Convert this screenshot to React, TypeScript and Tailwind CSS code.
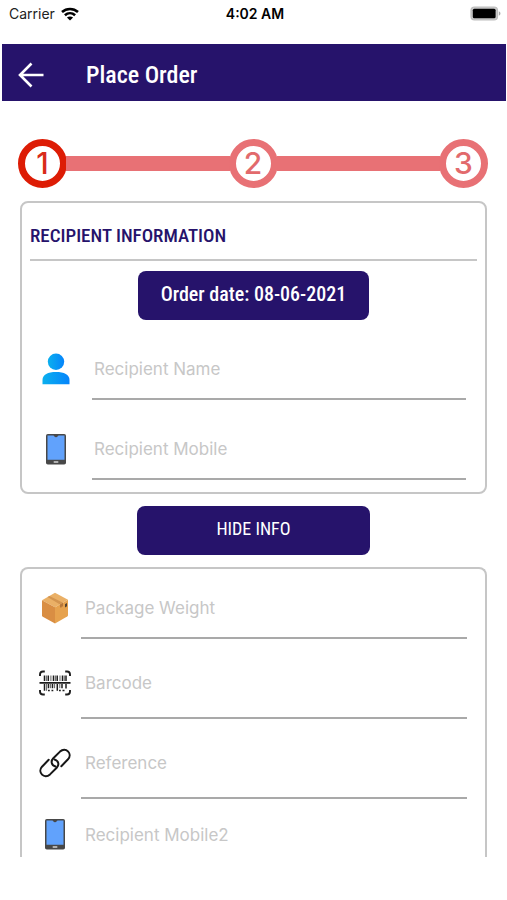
import { useState, type ReactNode } from "react";

const condensed = "font-['Roboto_Condensed','Roboto',sans-serif]";

function WifiIcon() {
  return (
    <svg viewBox="0 0 18 14" className="h-[14px] w-[18px]" fill="none" stroke="#000" strokeWidth="2.6" aria-hidden="true">
      <path d="M1 5C5.6.9 12.4.9 17 5" />
      <path d="M3.9 8.3c3-2.7 7.200-2.700 10.200 0" />
      <path d="M9 13.600 5.900 10.500c1.800-1.500 4.400-1.500 6.200 0z" fill="#000" stroke="none" />
    </svg>
  );
}

function BatteryIcon() {
  return (
    <svg viewBox="0 0 31 15" className="h-[15px] w-[31px]" aria-hidden="true">
      <rect x="1" y="1" width="26.500" height="13" rx="3.500" fill="#c9c9c9" stroke="#bdbdbd" strokeWidth="1.200" />
      <rect x="2.800" y="2.800" width="22.800" height="9.400" rx="1.500" fill="#000" />
      <path d="M28.800 5.300c2.200.8 2.200 3.600 0 4.400z" fill="#a8a8a8" />
    </svg>
  );
}

function BackIcon() {
  return (
    <svg viewBox="0 0 26 26" className="size-[26px]" fill="none" stroke="#fff" strokeWidth="2.600" aria-hidden="true">
      <path d="M25.500 13H2.500M13.500 1.500 2 13l11.500 11.500" />
    </svg>
  );
}

function PersonIcon() {
  return (
    <svg viewBox="0 0 28 32" className="h-8 w-7" aria-hidden="true">
      <defs>
        <linearGradient id="person" x1="0" x2="1">
          <stop offset="0" stopColor="#0bb0ee" />
          <stop offset="1" stopColor="#0584fb" />
        </linearGradient>
      </defs>
      <circle cx="14" cy="8.700" r="8.200" fill="url(#person)" />
      <path d="M.5 31.300V27c0-5.500 5.500-8 13.500-8s13.500 2.500 13.500 8v4.300z" fill="url(#person)" />
    </svg>
  );
}

function PhoneIcon() {
  return (
    <svg viewBox="0 0 22 32" className="h-8 w-[22px]" aria-hidden="true">
      <rect x="1" y="1" width="20" height="30.500" rx="1.800" fill="#484848" />
      <path d="M2.500 2.500h5.800c.8 0 .9 1.700 2.700 1.700s1.900-1.700 2.700-1.700h5.800v24.300h-17z" fill="#61a2fc" />
      <rect x="8.500" y="28.300" width="5" height="1.400" rx=".7" fill="#d4d4d4" />
    </svg>
  );
}

function PackageIcon() {
  return (
    <svg viewBox="0 0 28 32" className="h-8 w-7" aria-hidden="true">
      <path d="M14 .8 27 7.800 14 15.200 1 8.200z" fill="#eab066" />
      <path d="M1 8.200 14 15.200V31.500L1.800 24.800Q1 24.300 1 23.500z" fill="#d98e43" />
      <path d="M27 7.800 14 15.200V31.500l12.200-7Q27 24 27 23z" fill="#e6a24e" />
      <path d="M6.500 5 8.500 3.900l13.500 6.800-3 1.700z" fill="#d3944f" />
      <path d="m19 12.400 3-1.700v4l-1-.4-.8 1.400-1.200-.5z" fill="#b5763a" />
      <path d="m24 12.200 2-1.200v3.200l-2 1.300z" fill="#51402f" />
    </svg>
  );
}

function BarcodeIcon() {
  return (
    <svg viewBox="0 0 32 26" className="h-[26px] w-8" fill="none" stroke="#1d1d1d" aria-hidden="true">
      <path strokeWidth="1.900" d="M1 6V4.500Q1 1.500 4 1.500h1.800M26.200 1.500H28q3 0 3 3V6M31 20v1.500q0 3-3 3h-1.800M5.800 24.500H4q-3 0-3-3V20" />
      <path strokeWidth="1.800" d="M.5 12.800h31" />
      <path strokeWidth="1.500" d="M5.500 5.500V11M9.300 5.500V11M14.500 5.500V11M18.200 5.500V11M23.500 5.500V11M27 5.500V11M5.500 14v6.800M9.500 14v4.200M13.500 14v4.200M18.300 14v6.800M23 14v4.200M27 14v4.500" />
      <path strokeWidth=".7" d="M7.400 5.500V11M11.900 5.500V11M16.400 5.500V11M21 5.500V11M25.300 5.500V11M7.600 14v6.800M11.600 14v4.200M15.600 14v4.200M20.800 14v4.200" />
      <path strokeWidth="1.700" d="M9 20.500h1.800M12.500 20.500h1.800M20 20.500h1.800M23.500 20.500h2" />
    </svg>
  );
}

function LinkIcon() {
  return (
    <svg viewBox="0 0 32 30" className="h-[30px] w-8" fill="none" stroke="#171717" strokeWidth="2" strokeLinecap="round" strokeLinejoin="round" aria-hidden="true">
      <path d="M16.500 18.500c-4.200-1.300-5-5.400-2.200-8.200l6.700-6.700c5.600-5.200 13 2 8 7.700l-6.700 6.900" />
      <path d="M15.500 11.500c4.200 1.300 5 5.400 2.200 8.200L11 26.400c-5.600 5.200-13-2-8-7.700l6.700-6.900" />
    </svg>
  );
}

type Step = { number: number; ring: string };

const steps: Step[] = [
  { number: 1, ring: "border-[#dd1c05] text-[#d92b1a]" },
  { number: 2, ring: "border-[#e87175] text-[#e26a6c]" },
  { number: 3, ring: "border-[#e87175] text-[#e26a6c]" },
];

function Stepper() {
  return (
    <ol className="flex items-center pr-[19px] pl-[18px]" aria-label="Progress">
      {steps.map((step) => (
        <li key={step.number} className="flex items-center not-first:flex-1">
          {step.number > 1 && <span className="-mx-px h-[15px] flex-1 bg-[#e87175]" />}
          <span className={`flex size-[49px] items-center justify-center rounded-full border-7 bg-white text-[30px] font-medium ${step.ring}`}>
            {step.number}
          </span>
        </li>
      ))}
    </ol>
  );
}

type FieldProps = { id: string; label: string; icon: ReactNode; row: string; iconBox: string; inset: string };

function Field({ id, label, icon, row, iconBox, inset }: FieldProps) {
  return (
    <div className={`flex ${row}`}>
      <label htmlFor={id} className={`flex shrink-0 items-center justify-center ${iconBox}`}>
        {icon}
      </label>
      <input
        id={id}
        type="text"
        aria-label={label}
        placeholder={label}
        className={`min-w-0 flex-1 bg-transparent text-[17px] text-gray-800 outline-none placeholder:text-[#c7c7c7] ${inset}`}
      />
    </div>
  );
}

const contactField = {
  row: "h-20 px-[19px]",
  iconBox: "w-[51px] pt-[18px] pr-[22px]",
  inset: "border-b-2 border-[#a9a9a9] pt-[22px] pl-0.5",
};

const infoField = {
  iconBox: "w-[43px] pt-2 pr-2.5",
  inset: "border-b-2 border-[#a9a9a9] pt-3 pl-1",
};

export default function App() {
  const [showInfo, setShowInfo] = useState(true);
  const actionButton = `mx-auto flex h-[49px] w-1/2 max-w-[233px] items-center justify-center rounded-lg bg-[#26136b] pb-1 text-white ${condensed}`;

  return (
    <div className="flex h-screen flex-col overflow-hidden bg-white pb-[43px] font-['Inter',sans-serif]">
      <div className="grid h-11 shrink-0 grid-cols-3 items-start pr-1.5 pl-[9px] pt-1 text-sm leading-5 text-[#222]">
        <span className="flex items-center gap-1.5">
          Carrier <WifiIcon />
        </span>
        <span className="text-center font-semibold text-black">4:02 AM</span>
        <span className="flex h-[18px] items-center justify-end">
          <BatteryIcon />
        </span>
      </div>

      <header className="mr-px ml-0.5 flex h-[57px] shrink-0 items-center bg-[#26136b] px-4 pt-1 text-white">
        <button type="button" aria-label="Back">
          <BackIcon />
        </button>
        <h1 className={`ml-[42px] text-2xl font-medium ${condensed}`}>Place Order</h1>
      </header>

      <main className="flex min-h-0 flex-1 flex-col pt-[38px]">
        <Stepper />

        <section className="mx-5 mt-[13px] shrink-0 rounded-lg border-2 border-[#c6c6c6] pb-3">
          <div className="mx-2 border-b-2 border-[#c6c6c6]">
            <h2 className={`flex h-14 items-center pt-2.5 text-[19px] font-medium text-[#26136b] ${condensed}`}>
              RECIPIENT INFORMATION
            </h2>
          </div>
          <button type="button" className={`mt-2.5 text-xl font-medium ${actionButton}`}>
            Order date: 08-06-2021
          </button>
          <Field id="name" label="Recipient Name" icon={<PersonIcon />} {...contactField} />
          <Field id="mobile" label="Recipient Mobile" icon={<PhoneIcon />} {...contactField} />
        </section>

        <button
          type="button"
          aria-expanded={showInfo}
          onClick={() => setShowInfo(!showInfo)}
          className={`mt-3 shrink-0 text-lg ${actionButton}`}
        >
          {showInfo ? "HIDE INFO" : "SHOW INFO"}
        </button>

        {showInfo && (
          <section className="mx-5 mt-3 min-h-0 flex-1 overflow-hidden rounded-t-lg border-2 border-b-0 border-[#c6c6c6]">
            <Field id="weight" label="Package Weight" icon={<PackageIcon />} row="h-[70px] pr-[18px] pl-4" {...infoField} />
            <Field id="barcode" label="Barcode" icon={<BarcodeIcon />} row="h-20 pr-[18px] pl-4" {...infoField} />
            <Field id="reference" label="Reference" icon={<LinkIcon />} row="h-20 pr-[18px] pl-4" {...infoField} />
            <Field
              id="mobile2"
              label="Recipient Mobile2"
              icon={<PhoneIcon />}
              row="h-[58px] pr-[18px] pl-4"
              iconBox="w-[43px] pt-3 pr-2.5"
              inset="pt-4 pl-1"
            />
          </section>
        )}
      </main>
    </div>
  );
}
